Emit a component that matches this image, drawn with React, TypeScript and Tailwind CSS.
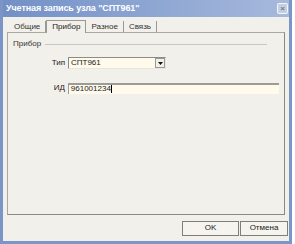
const tabs = ['Общие', 'Прибор', 'Разное', 'Связь']

export default function App() {
  return (
    <div className="w-[295px] h-[244px] bg-white font-['Liberation_Sans',Arial,sans-serif] text-[8px] text-[#1a1a1a] overflow-hidden">
      <div className="w-[292px] h-[244px] flex flex-col bg-[#7b95c6] px-[3px] pb-[3px]">
        {/* Title bar */}
        <div className="h-[17px] shrink-0 flex items-center justify-between pl-[3px] pr-[1px] bg-gradient-to-r from-[#7390c6] via-[#8ca5d2] to-[#a7b9dc]">
          <span className="text-white font-bold text-[9px] tracking-[-0.1px]">Учетная запись узла "СПТ961"</span>
          <div className="w-[11px] h-[11px] rounded-[2px] border border-white/80 bg-[#c6cfe2] flex items-center justify-center text-[8px] leading-none text-[#6d7a96] font-bold">
            ×
          </div>
        </div>

        {/* Body */}
        <div className="flex-1 flex flex-col bg-[#f2f0ea] px-[4px] pt-[3px]">
          <div className="flex items-end h-[12px] pl-[2px]">
            {tabs.map((t, i) => (
              <div
                key={t}
                className={
                  i === 1
                    ? 'h-[13px] -mb-px z-10 px-[5px] bg-[#f2f0ea] border border-b-0 border-[#9a9a94] flex items-center'
                    : 'h-[11px] px-[5px] border-r border-[#9a9a94] flex items-center text-[#333]'
                }
              >
                {t}
              </div>
            ))}
          </div>

          {/* Tab panel */}
          <div className="h-[183px] border border-[#a8a7a0] border-r-[#8a8983] border-b-[#8a8983] pt-[5px] px-[5px]">
            <div className="flex items-center gap-[4px] pr-[12px]">
              <span className="text-[#333]">Прибор</span>
              <div className="flex-1 h-px bg-[#c9c7bf]" />
            </div>

            <div className="mt-[7px] flex items-center">
              <span className="w-[55px] text-right pr-[3px]">Тип</span>
              <div className="w-[98px] h-[12px] bg-[#fffaec] border border-[#8c8b85] border-b-[#e8e6de] border-r-[#e8e6de] flex items-center">
                <span className="flex-1 pl-[2px] leading-none">СПТ961</span>
                <div className="w-[10px] h-[10px] bg-[#f2f0ea] border border-[#9a9993] flex items-center justify-center">
                  <svg width="5" height="3" viewBox="0 0 5 3">
                    <path d="M0 0h5L2.5 3z" fill="#111" />
                  </svg>
                </div>
              </div>
            </div>

            <div className="mt-[13px] flex items-center">
              <span className="w-[55px] text-right pr-[3px]">ИД</span>
              <div className="w-[212px] h-[11px] bg-[#fffaec] border-t-2 border-l border-[#9c9b95] flex items-center pl-[2px] leading-none">
                961001234<span className="w-px h-[8px] bg-black" />
              </div>
            </div>
          </div>

          {/* Footer */}
          <div className="flex-1 flex items-center justify-end gap-[1px] -mr-[3px]">
            <button className="w-[57px] h-[15px] border border-[#7f7e78] bg-[#f5f4ef] text-[8px]">OK</button>
            <button className="w-[48px] h-[15px] border border-[#7f7e78] bg-[#f5f4ef] text-[8px]">Отмена</button>
          </div>
        </div>
      </div>
    </div>
  )
}
